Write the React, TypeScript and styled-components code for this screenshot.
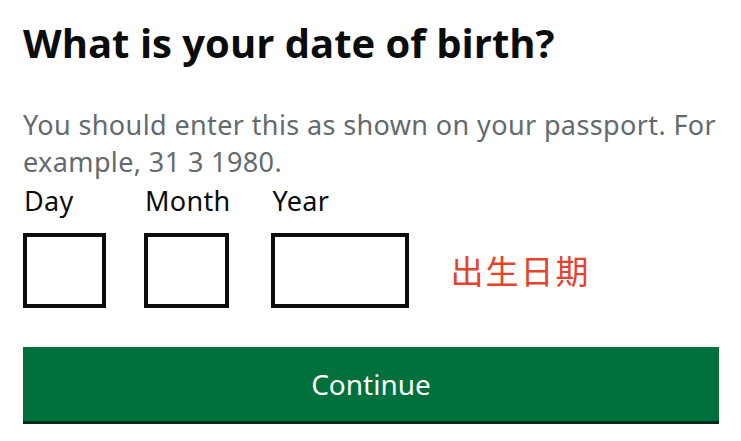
import React from "react";
import styled, { createGlobalStyle } from "styled-components";

const Global = createGlobalStyle`
  html, body { margin: 0; padding: 0; background: #ffffff; }
  body { font-family: "Noto Sans", "Open Sans", sans-serif; color: #0b0c0c; }
`;

const Page = styled.main`
  width: 741px;
  height: 441px;
  box-sizing: border-box;
  padding: 19px 23px 0 23px;
  display: flex;
  flex-direction: column;
  overflow: hidden;
`;

const Heading = styled.h1`
  margin: 0;
  font-family: "Open Sans", "Liberation Sans", sans-serif;
  font-weight: 700;
  font-size: 40px;
  line-height: 48px;
  letter-spacing: 0px;
  color: #0b0c0c;
`;

const Hint = styled.p`
  margin: 39px -12px 0 0;
  font-family: "Noto Sans", sans-serif;
  font-size: 27px;
  line-height: 37px;
  letter-spacing: 0.38px;
  color: #626a6e;
`;

const Fields = styled.div`
  display: flex;
  align-items: flex-end;
  margin-top: 3px;
`;

const Field = styled.label<{ $gap: number }>`
  display: flex;
  flex-direction: column;
  margin-right: ${(p) => p.$gap}px;
`;

const LabelText = styled.span`
  font-family: "Noto Sans", sans-serif;
  font-size: 27px;
  line-height: 36px;
  letter-spacing: 0.3px;
  color: #0b0c0c;
  margin-bottom: 14px;
  padding-left: 1px;
`;

const Box = styled.input<{ $w: number }>`
  width: ${(p) => p.$w}px;
  height: 75px;
  box-sizing: border-box;
  border: 4px solid #0b0c0c;
  border-radius: 0;
  margin: 0;
  padding: 0;
  background: #ffffff;
  outline: none;
`;

const Note = styled.span`
  align-self: flex-end;
  margin-left: 1px;
  margin-bottom: 18px;
  font-family: "Noto Sans CJK SC", sans-serif;
  font-size: 33px;
  line-height: 40px;
  color: #e8412c;
  letter-spacing: 2px;
`;

const Button = styled.button`
  margin-top: 39px;
  width: 696px;
  height: 77px;
  border: none;
  border-radius: 0;
  background: #00703c;
  box-shadow: inset 0 -3px 0 #002d18;
  color: #ffffff;
  font-family: "Noto Sans", sans-serif;
  font-size: 28px;
  padding: 0 0 3px 0;
  cursor: pointer;
`;

export default function App() {
  return (
    <>
      <Global />
      <Page>
        <Heading>What is your date of birth?</Heading>
        <Hint>You should enter this as shown on your passport. For example, 31 3 1980.</Hint>
        <Fields>
          <Field $gap={38}>
            <LabelText>Day</LabelText>
            <Box $w={83} />
          </Field>
          <Field $gap={41}>
            <LabelText>Month</LabelText>
            <Box $w={85} />
          </Field>
          <Field $gap={40}>
            <LabelText>Year</LabelText>
            <Box $w={138} />
          </Field>
          <Note>出生日期</Note>
        </Fields>
        <Button>Continue</Button>
      </Page>
    </>
  );
}
